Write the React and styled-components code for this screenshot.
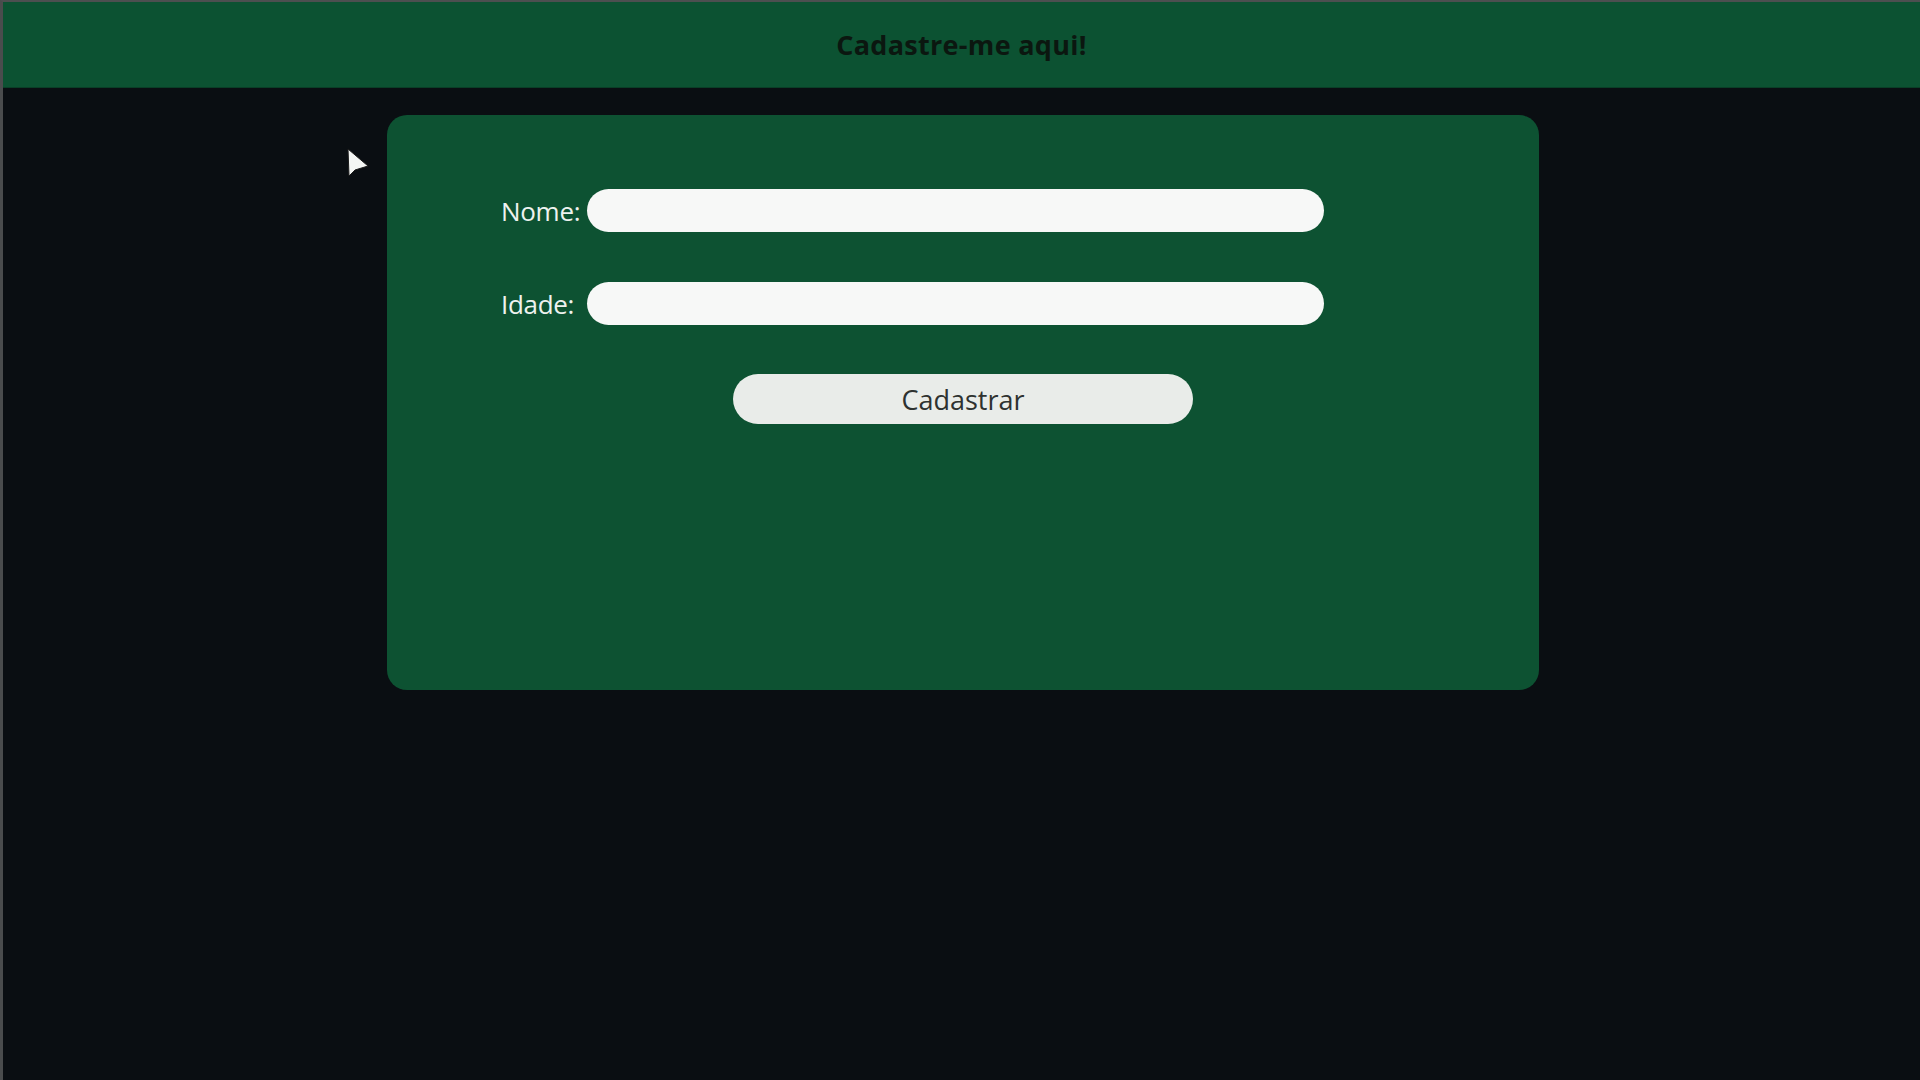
import React from "react";
import styled, { createGlobalStyle } from "styled-components";

const GlobalStyle = createGlobalStyle`
	html, body {
		margin: 0;
		padding: 0;
		background-color: #0a0e12;
	}
	body {
		font-family: "Open Sans", "Liberation Sans", sans-serif;
	}
	* {
		box-sizing: border-box;
	}
`;

function App() {
	return (
		<Page>
			<GlobalStyle />
			<Header>
				<Title>Cadastre-me aqui!</Title>
			</Header>
			<Main>
				<Cursor width="26" height="32" viewBox="0 0 26 32">
					<path
						d="M3 2 L4 29 L10 23 L23 19 Z"
						fill="#f4f6f4"
						stroke="#1c1c1c"
						strokeWidth="1"
						strokeLinejoin="round"
					/>
				</Cursor>
				<Card>
					<Form onSubmit={(e) => e.preventDefault()}>
						<Fields>
							<Label htmlFor="nome">Nome:</Label>
							<Input id="nome" type="text" />
							<Label htmlFor="idade">Idade:</Label>
							<Input id="idade" type="text" />
						</Fields>
						<ButtonRow>
							<Button type="submit">Cadastrar</Button>
						</ButtonRow>
					</Form>
				</Card>
			</Main>
		</Page>
	);
}

export default App;

const Page = styled.div`
	min-height: 1080px;
	background-color: #0a0e12;
	border-top: 2px solid #4d4f50;
	border-left: 3px solid #4a4c4d;
`;

const Header = styled.header`
	height: 86px;
	display: flex;
	align-items: center;
	justify-content: center;
	background-color: #0c5232;
	border-bottom: 1px solid #0a3f27;
`;

const Title = styled.h1`
	margin: 0;
	font-size: 27px;
	font-weight: 700;
	color: #0b1710;
	letter-spacing: 0.3px;
`;

const Main = styled.main`
	position: relative;
	padding-top: 27px;
	padding-left: 3px;
	display: flex;
	justify-content: center;
`;

const Cursor = styled.svg`
	position: absolute;
	left: 342px;
	top: 59px;
`;

const Card = styled.section`
	width: 1152px;
	height: 575px;
	background-color: #0d5232;
	border-radius: 20px;
	padding-top: 74px;
`;

const Form = styled.form`
	display: flex;
	flex-direction: column;
	gap: 49px;
`;

const Fields = styled.div`
	display: grid;
	grid-template-columns: auto 737px;
	justify-content: start;
	column-gap: 7px;
	row-gap: 50px;
	align-items: center;
	padding-left: 114px;
`;

const Label = styled.label`
	font-size: 26px;
	color: #eef2ef;
	letter-spacing: -0.3px;
`;

const Input = styled.input`
	height: 43px;
	border: none;
	border-radius: 22px;
	background-color: #f7f8f7;
	padding: 0 18px;
	font-size: 18px;
	outline: none;
`;

const ButtonRow = styled.div`
	display: flex;
	justify-content: center;
`;

const Button = styled.button`
	width: 460px;
	height: 50px;
	border: none;
	border-radius: 25px;
	background-color: #e9ece9;
	color: #2e3230;
	font-family: "Open Sans", "Liberation Sans", sans-serif;
	font-size: 27px;
	cursor: pointer;
`;
